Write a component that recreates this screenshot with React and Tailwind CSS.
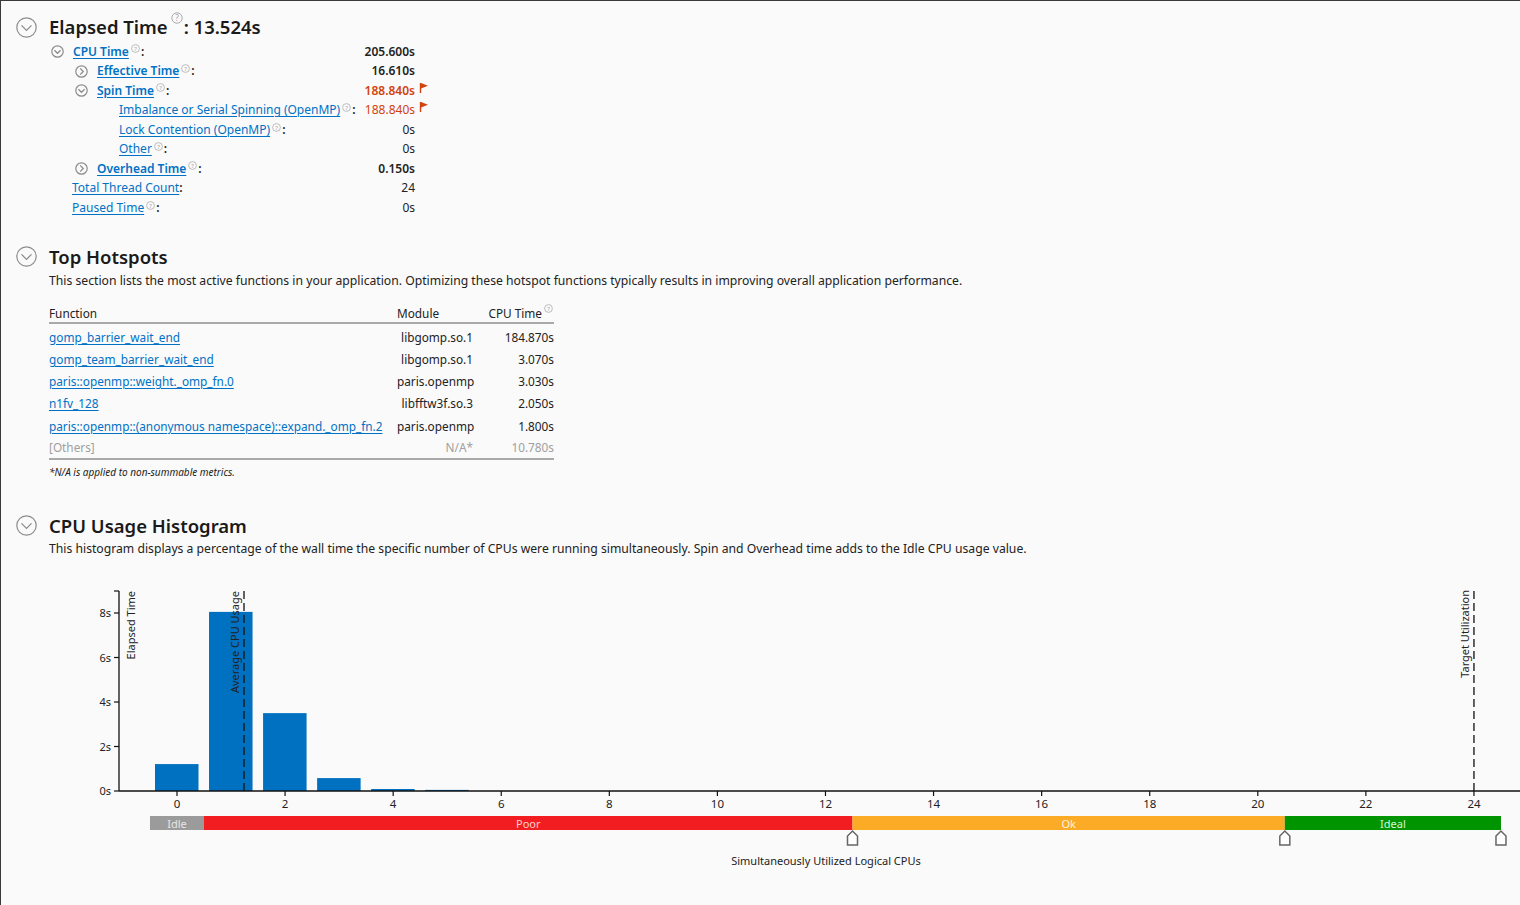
import React from "react";

const LINK = "text-[#0071c5] underline underline-offset-2 decoration-[#0071c5]";

function Toggle({ size = 13, dir = "down" }) {
  const r = size / 2 - 0.8;
  const c = size / 2;
  const s = size * 0.17;
  const d =
    dir === "down"
      ? `M${c - s * 1.4},${c - s * 0.6} L${c},${c + s * 0.8} L${c + s * 1.4},${c - s * 0.6}`
      : `M${c - s * 0.6},${c - s * 1.4} L${c + s * 0.8},${c} L${c - s * 0.6},${c + s * 1.4}`;
  return (
    <svg width={size} height={size} viewBox={`0 0 ${size} ${size}`} className="shrink-0">
      <circle cx={c} cy={c} r={r} fill="none" stroke="#8c8c8c" strokeWidth="1.2" />
      <path d={d} fill="none" stroke="#8c8c8c" strokeWidth="1.3" />
    </svg>
  );
}

function Help({ big = false }) {
  const size = big ? 12 : 9;
  return (
    <svg width={size} height={size} viewBox="0 0 12 12" className={big ? "self-start mt-[-3px] ml-[3px] mr-[1px]" : "self-start mt-[-1px] ml-[2px] mr-[1px]"}>
      <circle cx="6" cy="6" r="5.2" fill="none" stroke="#a0a0a0" strokeWidth="0.9" />
      <text x="6" y="8.8" textAnchor="middle" fontSize="8" fill="#a0a0a0" fontFamily="Noto Sans, sans-serif">?</text>
    </svg>
  );
}

function Flag() {
  return (
    <svg width="10" height="12" viewBox="0 0 10 12" className="mt-[-6px]">
      <path d="M1.5,1 L1.5,11" stroke="#d2430c" strokeWidth="1.4" />
      <path d="M2,1 L9,3.8 L2,6.6 Z" fill="#d2430c" />
    </svg>
  );
}

function MetricRow({ indent, toggle, label, bold, help = true, value, alert, valueBold }) {
  return (
    <div className="flex items-center h-[19.5px]">
      <div className="flex items-center flex-1" style={{ paddingLeft: indent }}>
        {toggle && (
          <span className="w-[22px] flex">
            <Toggle size={13} dir={toggle} />
          </span>
        )}
        <span className={`${LINK} ${bold ? "font-semibold" : ""}`}>{label}</span>
        {help && <Help />}
        <span className="font-semibold">:</span>
      </div>
      <div
        className={`text-right ${valueBold ? "font-semibold" : ""} ${alert ? "text-[#d2430c]" : "text-[#222]"}`}
      >
        {value}
      </div>
      <div className="w-[14px] pl-[4px] flex">{alert && <Flag />}</div>
    </div>
  );
}

const hotspots = [
  ["gomp_barrier_wait_end", "libgomp.so.1", "184.870s"],
  ["gomp_team_barrier_wait_end", "libgomp.so.1", "3.070s"],
  ["paris::openmp::weight._omp_fn.0", "paris.openmp", "3.030s"],
  ["n1fv_128", "libfftw3f.so.3", "2.050s"],
  ["paris::openmp::(anonymous namespace)::expand._omp_fn.2", "paris.openmp", "1.800s"],
];

function SectionHead({ title, children }) {
  return (
    <div className="flex items-center h-[24px]">
      <span className="w-[48px] pl-[15px] flex">
        <Toggle size={21} />
      </span>
      <span className="text-[18.5px] font-semibold text-[#1a1a1a] flex items-center">{title}</span>
      {children}
    </div>
  );
}

function Histogram() {
  const X = (v) => 176 + v * 54.04;
  const Y = (s) => 791 - s * 22.25;
  const bars = [1.21, 8.05, 3.5, 0.58, 0.09, 0.05];
  const oy = 580;
  const marker = (x) =>
    `M${x - 5},${845 - oy} L${x - 5},${836 - oy} L${x},${831 - oy} L${x + 5},${836 - oy} L${x + 5},${845 - oy} Z`;
  const font = "Noto Sans, sans-serif";
  return (
    <svg width="1519" height="300" viewBox="0 0 1519 300" className="block">
      {/* y axis */}
      <line x1="118" y1={591 - oy} x2="118" y2={791 - oy} stroke="#111" strokeWidth="1.3" />
      {[0, 2, 4, 6, 8].map((s) => (
        <g key={s}>
          <line x1="113" x2="118" y1={Y(s) - oy} y2={Y(s) - oy} stroke="#111" strokeWidth="1.2" />
          <text x="110" y={Y(s) - oy + 4} textAnchor="end" fontSize="11" fill="#222" fontFamily={font}>
            {s}s
          </text>
        </g>
      ))}
      <line x1="118" y1={591 - oy} x2="113" y2={591 - oy} stroke="#111" strokeWidth="1.2" />
      {/* bars */}
      {bars.map((b, i) => (
        <rect key={i} x={X(i) - 22} y={Y(b) - oy} width="43.5" height={b * 22.25} fill="#0070c0" />
      ))}
      {/* x axis */}
      <line x1="118" y1={791 - oy} x2="1519" y2={791 - oy} stroke="#111" strokeWidth="1.3" />
      {Array.from({ length: 13 }, (_, k) => k * 2).map((v) => (
        <g key={v}>
          <line x1={X(v)} x2={X(v)} y1={791 - oy} y2={796 - oy} stroke="#111" strokeWidth="1.2" />
          <text x={X(v)} y={808 - oy} textAnchor="middle" fontSize="11.5" fill="#222" fontFamily={font}>
            {v}
          </text>
        </g>
      ))}
      {/* dashed markers */}
      <line x1="243" x2="243" y1={591 - oy} y2={791 - oy} stroke="#111" strokeWidth="1.3" strokeDasharray="8 4" />
      <line x1={X(24)} x2={X(24)} y1={591 - oy} y2={791 - oy} stroke="#111" strokeWidth="1.3" strokeDasharray="8 4" />
      <text transform={`translate(134,${591 - oy}) rotate(-90)`} textAnchor="end" fontSize="11" fill="#222" fontFamily={font}>
        Elapsed Time
      </text>
      <text transform={`translate(238,${591 - oy}) rotate(-90)`} textAnchor="end" fontSize="11" fill="#222" fontFamily={font}>
        Average CPU Usage
      </text>
      <text transform={`translate(1468,${590 - oy}) rotate(-90)`} textAnchor="end" fontSize="11" fill="#222" fontFamily={font}>
        Target Utilization
      </text>
      {/* utilization band */}
      <rect x={X(-0.5)} y={816 - oy} width={X(0.5) - X(-0.5)} height="14" fill="#9b9b9b" />
      <rect x={X(0.5)} y={816 - oy} width={X(12.5) - X(0.5)} height="14" fill="#f21d20" />
      <rect x={X(12.5)} y={816 - oy} width={X(20.5) - X(12.5)} height="14" fill="#fbab26" />
      <rect x={X(20.5)} y={816 - oy} width={X(24.5) - X(20.5)} height="14" fill="#009400" />
      <text x={X(0)} y={827.5 - oy} textAnchor="middle" fontSize="11" fill="#e6e6e6" fontFamily={font}>Idle</text>
      <text x={X(6.5)} y={827.5 - oy} textAnchor="middle" fontSize="11" fill="#ffd0d0" fontFamily={font}>Poor</text>
      <text x={X(16.5)} y={827.5 - oy} textAnchor="middle" fontSize="11" fill="#fff4dc" fontFamily={font}>Ok</text>
      <text x={X(22.5)} y={827.5 - oy} textAnchor="middle" fontSize="11" fill="#d6f5d6" fontFamily={font}>Ideal</text>
      {[X(12.5), X(20.5), X(24.5)].map((x, i) => (
        <path key={i} d={marker(x)} fill="#fff" stroke="#666" strokeWidth="1.5" />
      ))}
      <text x="825" y={865 - oy} textAnchor="middle" fontSize="11" fill="#222" fontFamily={font}>
        Simultaneously Utilized Logical CPUs
      </text>
    </svg>
  );
}

export default function App() {
  return (
    <div
      className="w-[1520px] h-[905px] bg-[#fafafa] border-l border-t border-[#3a3a3a] text-[12px] text-[#222] overflow-hidden"
      style={{ fontFamily: '"Noto Sans", "Open Sans", sans-serif' }}
    >
      {/* Elapsed time */}
      <div className="pt-[14px]">
        <SectionHead title="Elapsed Time">
          <Help big />
          <span className="text-[18.5px] font-semibold text-[#1a1a1a]">:&nbsp;13.524s</span>
        </SectionHead>
        <div className="mt-[3px] ml-[50px] w-[378px] leading-none">
          <MetricRow indent={0} toggle="down" label="CPU Time" bold value="205.600s" valueBold />
          <MetricRow indent={24} toggle="right" label="Effective Time" bold value="16.610s" valueBold />
          <MetricRow indent={24} toggle="down" label="Spin Time" bold value="188.840s" valueBold alert />
          <MetricRow indent={68} label="Imbalance or Serial Spinning (OpenMP)" value="188.840s" alert />
          <MetricRow indent={68} label="Lock Contention (OpenMP)" value="0s" />
          <MetricRow indent={68} label="Other" value="0s" />
          <MetricRow indent={24} toggle="right" label="Overhead Time" bold value="0.150s" valueBold />
          <MetricRow indent={21} label="Total Thread Count" help={false} value="24" />
          <MetricRow indent={21} label="Paused Time" value="0s" />
        </div>
      </div>

      {/* Top hotspots */}
      <div className="mt-[27px]">
        <SectionHead title="Top Hotspots" />
        <p className="ml-[48px] mt-[4px] h-[16px] leading-[16px] text-[12.2px]">
          This section lists the most active functions in your application. Optimizing these hotspot functions typically
          results in improving overall application performance.
        </p>
        <div className="ml-[48px] mt-[17px] w-[505px] text-[11.8px]">
          <div className="flex items-center h-[18px] border-b-2 border-[#a9a9a9]">
            <span className="w-[348px]">Function</span>
            <span className="w-[76px]">Module</span>
            <span className="flex-1 flex justify-end items-center">
              CPU Time
              <Help />
            </span>
          </div>
          <div className="pt-[3px]">
            {hotspots.map(([fn, mod, t]) => (
              <div key={fn} className="flex items-center h-[22.2px]">
                <span className="w-[348px]">
                  <span className={LINK}>{fn}</span>
                </span>
                <span className="w-[76px] text-right whitespace-nowrap">{mod}</span>
                <span className="flex-1 text-right">{t}</span>
              </div>
            ))}
            <div className="flex items-center h-[23px] border-b-2 border-[#a9a9a9] text-[#a0a0a0]">
              <span className="w-[348px]">[Others]</span>
              <span className="w-[76px] text-right">N/A*</span>
              <span className="flex-1 text-right">10.780s</span>
            </div>
          </div>
          <p className="mt-[6px] text-[10px] italic h-[12px] leading-[12px]">*N/A is applied to non-summable metrics.</p>
        </div>
      </div>

      {/* CPU usage histogram */}
      <div className="mt-[35px]">
        <SectionHead title="CPU Usage Histogram" />
        <p className="ml-[48px] mt-[4px] h-[16px] leading-[16px] text-[12.2px]">
          This histogram displays a percentage of the wall time the specific number of CPUs were running simultaneously.
          Spin and Overhead time adds to the Idle CPU usage value.
        </p>
        <div className="mt-[23px]">
          <Histogram />
        </div>
      </div>
    </div>
  );
}
